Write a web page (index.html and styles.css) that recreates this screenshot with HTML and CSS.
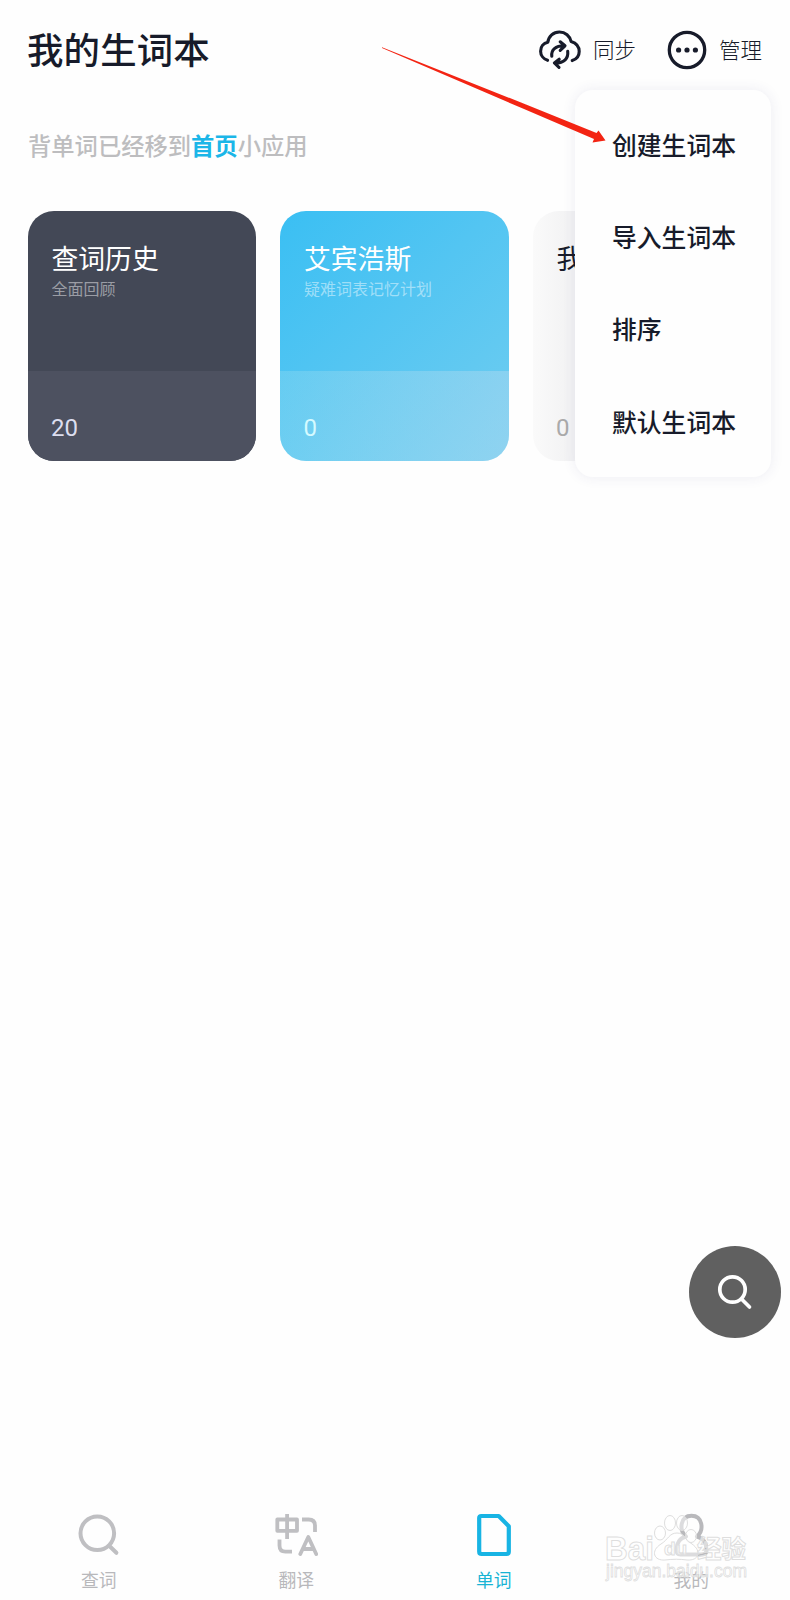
FILE: index.html
```html
<!DOCTYPE html>
<html lang="zh-CN">
<head>
<meta charset="utf-8">
<title>我的生词本</title>
<link rel="stylesheet" href="styles.css">
</head>
<body>
<div class="app">
  <header class="header">
    <h1 class="title">我的生词本</h1>
    <div class="actions">
      <div class="action">
        <svg class="action-icon" width="42" height="40" viewBox="0 0 42 40" fill="none" stroke="#171b2a" stroke-width="3.1" stroke-linecap="round" stroke-linejoin="round">
          <path d="M8.6 30.3C4.2 29 1.6 25 1.6 21.2C1.6 16.6 4.6 13.2 8.8 12.3C9.6 6.3 14.4 2 20.4 2C26.4 2 30.9 6 32.1 11.5C37 13 40.2 16.800 40.2 21.6C40.2 25.8 37.6 29.3 33.2 30.6"/>
          <path d="M12.8 26.2C12 20 16.5 15.8 25 15.8M21.2 11.8L26 15.8L21.2 20.4"/>
          <path d="M28.700 21.4C29.5 28.4 25.300 33 16.2 33M20.2 29.2L15.400 33L20 37.4"/>
        </svg>
        <span>同步</span>
      </div>
      <div class="action">
        <svg class="action-icon" width="40" height="40" viewBox="0 0 40 40">
          <circle cx="20" cy="20" r="17.7" fill="none" stroke="#171b2a" stroke-width="3.3"/>
          <g fill="#171b2a"><circle cx="11.6" cy="20" r="2.6"/><circle cx="20" cy="20" r="2.6"/><circle cx="28.4" cy="20" r="2.6"/></g>
        </svg>
        <span>管理</span>
      </div>
    </div>
  </header>
  <p class="notice">背单词已经移到<a class="notice-link">首页</a>小应用</p>
  <main class="cards">
    <section class="card card-dark">
      <div class="card-top"><h2>查词历史</h2><p>全面回顾</p></div>
      <div class="card-count">20</div>
    </section>
    <section class="card card-blue">
      <div class="card-top"><h2>艾宾浩斯</h2><p>疑难词表记忆计划</p></div>
      <div class="card-count">0</div>
    </section>
    <section class="card card-light">
      <div class="card-top"><h2>我</h2></div>
      <div class="card-count">0</div>
    </section>
  </main>
  <nav class="tabs">
    <div class="tab">
      <svg width="44" height="44" viewBox="0 0 44 44" fill="none" stroke="#bfbfc2" stroke-width="4" stroke-linecap="round">
        <circle cx="20.3" cy="20.3" r="16.800"/><path d="M32.4 33L39.4 39.8"/>
      </svg>
      <span>查词</span>
    </div>
    <div class="tab">
      <svg width="44" height="44" viewBox="0 0 44 44" fill="none" stroke="#bfbfc2" stroke-width="3.8" stroke-linejoin="round">
        <path d="M3.300 6.5H23V17.8H3.300ZM13.100 1V26"/>
        <path d="M28 6.500H34.500Q41 6.5 41 12.5V19"/>
        <path d="M5.500 26.500V32.5Q5.500 38.7 11.500 38.7H18"/>
        <path stroke-linecap="round" d="M26.300 41L34.300 24L42.200 41M29 36H39.500"/>
      </svg>
      <span>翻译</span>
    </div>
    <div class="tab tab-active">
      <svg width="44" height="44" viewBox="0 0 44 44" fill="none" stroke="#18b4e4" stroke-width="4.200" stroke-linejoin="round">
        <path d="M9.2 3H26.7L36.8 13.2V38.500Q36.8 41 34.300 41H9.700Q7.2 41 7.2 38.500V5Q7.2 3 9.2 3Z"/>
      </svg>
      <span>单词</span>
    </div>
    <div class="tab">
      <svg width="44" height="44" viewBox="0 0 44 44" fill="none" stroke="#b9b9bc" stroke-width="4" stroke-linejoin="round">
        <path d="M17 23.500C9.500 17 11.500 2.700 22.500 2.700C33.500 2.700 35.500 17 28 23.500C34 25 37.500 30 37.500 36.500Q37.500 41.500 33.500 41.500H11.500Q7.500 41.500 7.500 36.500C7.500 30 11 25 17 23.500Z"/>
      </svg>
      <span>我的</span>
    </div>
  </nav>

  <div class="menu">
    <div class="menu-item">创建生词本</div>
    <div class="menu-item">导入生词本</div>
    <div class="menu-item">排序</div>
    <div class="menu-item">默认生词本</div>
  </div>
  <svg class="arrow" width="226" height="98" viewBox="0 0 226 98">
    <path d="M1 0.3L145 57.500L215.500 86L217.500 83.500L224.500 93.500L211.500 95.500L213 92L143 62L1 1Z" fill="#f32413"/>
  </svg>
  <div class="search">
    <svg width="36" height="36" viewBox="0 0 36 36" fill="none" stroke="#fff" stroke-width="3.7" stroke-linecap="round">
      <circle cx="15.500" cy="15.500" r="12.7"/><path d="M25 25.500L32.500 33"/>
    </svg>
  </div>
  <svg class="watermark" width="150" height="80" viewBox="0 0 150 80">
    <g class="mark">
      <text x="2" y="54.500" class="mark-brand" textLength="49" lengthAdjust="spacingAndGlyphs">Bai</text>
      <path d="M74 28C66 28 65 35 58 39C47 46 51 56 62 55C70 54 77 54 84 55C96 56 99 46 89 39C82 35 82 28 74 28Z"/>
      <ellipse cx="57" cy="28" rx="5.500" ry="7"/>
      <ellipse cx="67" cy="18" rx="5.500" ry="7.500"/>
      <ellipse cx="79" cy="18" rx="5.500" ry="7.500"/>
      <ellipse cx="88" cy="31" rx="5.500" ry="6.500"/>
      <text x="61" y="50" class="mark-du">du</text>
      <text x="94" y="53" class="mark-cn">经验</text>
      <text x="3" y="71.500" class="mark-url" textLength="141" lengthAdjust="spacingAndGlyphs">jingyan.baidu.com</text>
    </g>
  </svg>
</div>
</body>
</html>
```
FILE: styles.css
```css
* { box-sizing: border-box; }
body { margin: 0; background: #fefefe; }
h1, h2, p { margin: 0; font-weight: 400; }
svg { display: block; flex: none; }
.app {
  position: relative;
  width: 790px;
  height: 1600px;
  overflow: hidden;
  display: flex;
  flex-direction: column;
  color: #171b2a;
  font-family: Roboto, "Noto Sans CJK SC", sans-serif;
}
.header {
  height: 100px;
  padding: 0 27px;
  display: flex;
  justify-content: space-between;
  align-items: center;
}
.title { padding-top: 4px; font-size: 36.4px; font-weight: 500; line-height: 50px; letter-spacing: .2px; }
.actions { display: flex; gap: 31px; margin-right: 1px; }
.action { display: flex; align-items: center; gap: 12px; font-size: 21.5px; line-height: 40px; font-weight: 300; }
.action span { padding-top: 1px; }
.notice {
  height: 92px;
  padding: 1px 0 0 28px;
  line-height: 92px;
  font-size: 23.3px;
  font-weight: 500;
  color: #bdbdbf;
}
.notice-link { color: #1bb6e8; font-weight: 700; }
.cards { display: flex; gap: 24px; padding: 19px 0 0 27.500px; flex: 1; align-items: flex-start; }
.card {
  flex: none;
  width: 228.500px;
  height: 250px;
  border-radius: 26px;
  overflow: hidden;
  display: flex;
  flex-direction: column;
  color: #fff;
}
.card-top { height: 160px; padding: 30px 24px 0; }
.card-top h2 { font-size: 26.8px; line-height: 38px; font-weight: 400; }
.card-top p { font-size: 16px; line-height: 22px; color: rgba(255,255,255,.47); }
.card-count { flex: 1; padding: 43px 23.500px 0; font-size: 24px; line-height: 28px; }
.card-dark { background: #434856; }
.card-dark .card-count { background: #4d5160; color: #dcdeef; }
.card-blue { background: linear-gradient(135deg, #3abff3 0%, #53c5f2 45%, #70cdf0 100%); }
.card-blue .card-count { background: linear-gradient(90deg, rgba(190,235,240,.22), rgba(190,220,240,.4)); color: #d5faff; }
.card-light { background: linear-gradient(90deg, #fafafa, #f3f3f4 15%); color: #171b2a; }
.card-light .card-count { color: #aaa; }
.tabs { height: 100px; display: flex; padding-top: 13px; }
.tab {
  flex: 1;
  display: flex;
  flex-direction: column;
  align-items: center;
  gap: 11px;
  font-size: 17.8px;
  line-height: 26px;
  color: #b8b8bb;
}
.tab-active { color: #18b4d4; }
.menu {
  position: absolute;
  left: 575px;
  top: 90px;
  width: 196px;
  height: 387px;
  padding: 11px 0 0 37px;
  border-radius: 18px;
  background: #fefefe;
  box-shadow: 0 0 14px rgba(60,60,120,.09);
}
.menu-item { height: 92.200px; line-height: 92px; font-size: 24.800px; font-weight: 500; white-space: nowrap; }
.arrow { position: absolute; left: 381px; top: 47px; }
.search {
  position: absolute;
  left: 688.500px;
  top: 1246px;
  width: 92px;
  height: 92px;
  border-radius: 50%;
  background: #606060;
  display: flex;
  align-items: center;
  justify-content: center;
}
.watermark { position: absolute; left: 603px; top: 1505px; }
.mark { fill: rgba(255,255,255,.5); stroke: #dedede; stroke-width: 1; font-family: "Liberation Sans", "Noto Sans CJK SC", sans-serif; }
.mark-brand { font-size: 33px; font-weight: 700; }
.mark-du { font-size: 19px; font-weight: 700; }
.mark-cn { font-size: 24.500px; font-weight: 700; }
.mark-url { font-size: 18px; stroke-width: .8; }
```
